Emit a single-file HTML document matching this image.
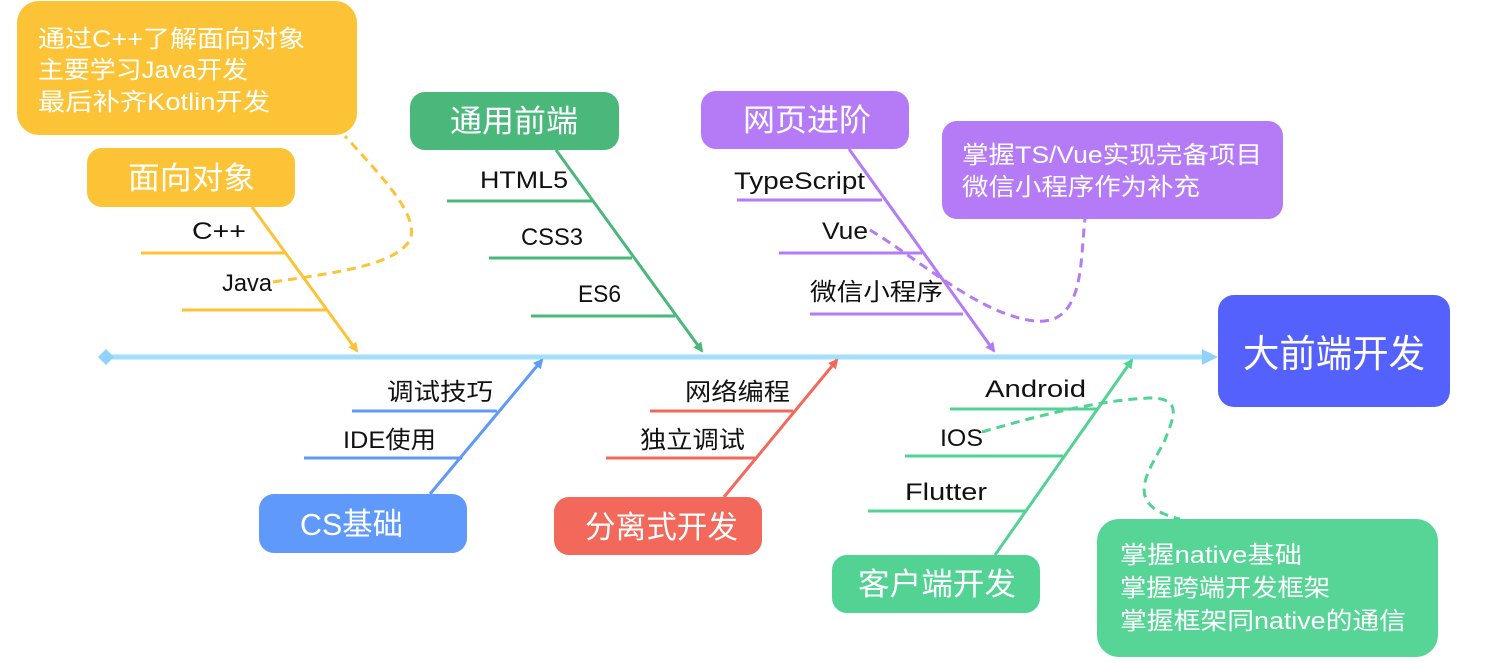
<!DOCTYPE html>
<html><head><meta charset="utf-8"><style>
html,body{margin:0;padding:0;background:#fff;width:1494px;height:663px;overflow:hidden}
svg{display:block;font-family:"Liberation Sans","Noto Sans CJK SC",sans-serif}
.l{font-size:24px;fill:#111}
.w{fill:#fff}
</style></head><body>
<svg width="1494" height="663" viewBox="0 0 1494 663">
<defs>
<marker id="ay" markerWidth="10" markerHeight="10" refX="8" refY="5" orient="auto" markerUnits="userSpaceOnUse"><path d="M0,0 L10,5 L0,10 Z" fill="#fcc336"/></marker>
<marker id="ag" markerWidth="10" markerHeight="10" refX="8" refY="5" orient="auto" markerUnits="userSpaceOnUse"><path d="M0,0 L10,5 L0,10 Z" fill="#4bb87b"/></marker>
<marker id="ap" markerWidth="10" markerHeight="10" refX="8" refY="5" orient="auto" markerUnits="userSpaceOnUse"><path d="M0,0 L10,5 L0,10 Z" fill="#b57bf7"/></marker>
<marker id="ab" markerWidth="10" markerHeight="10" refX="8" refY="5" orient="auto" markerUnits="userSpaceOnUse"><path d="M0,0 L10,5 L0,10 Z" fill="#5b9cf8"/></marker>
<marker id="ar" markerWidth="10" markerHeight="10" refX="8" refY="5" orient="auto" markerUnits="userSpaceOnUse"><path d="M0,0 L10,5 L0,10 Z" fill="#f2685a"/></marker>
<marker id="an" markerWidth="10" markerHeight="10" refX="8" refY="5" orient="auto" markerUnits="userSpaceOnUse"><path d="M0,0 L10,5 L0,10 Z" fill="#52d393"/></marker>
</defs>
<line x1="106" y1="357" x2="1205" y2="357" stroke="#a3defb" stroke-width="5"/>
<path d="M98,357 L106,349 L114,357 L106,365 Z" fill="#8fd3fb"/>
<path d="M1202,349 L1218,357 L1202,365 Z" fill="#8fd3fb"/>

<rect x="17" y="1" width="340" height="134" rx="22" fill="#fcc336"/>
<text class="w" font-size="24" x="38" y="47" textLength="267" lengthAdjust="spacingAndGlyphs">通过C++了解面向对象</text>
<text class="w" font-size="24" x="38" y="78" textLength="210" lengthAdjust="spacingAndGlyphs">主要学习Java开发</text>
<text class="w" font-size="24" x="38" y="110" textLength="232" lengthAdjust="spacingAndGlyphs">最后补齐Kotlin开发</text>
<rect x="87" y="148" width="208" height="59" rx="15" fill="#fcc336"/>
<text class="w" font-size="31" x="128" y="189" textLength="127" lengthAdjust="spacingAndGlyphs">面向对象</text>
<line x1="252" y1="207" x2="357" y2="351" stroke="#fcc336" stroke-width="3" marker-end="url(#ay)"/>
<line x1="141" y1="253" x2="286" y2="253" stroke="#fcc336" stroke-width="3"/>
<line x1="182" y1="310" x2="326" y2="310" stroke="#fcc336" stroke-width="3"/>
<text class="l" x="192" y="239" textLength="54" lengthAdjust="spacingAndGlyphs">C++</text>
<text class="l" x="222" y="291" textLength="50" lengthAdjust="spacingAndGlyphs">Java</text>
<path d="M273,282 C340,272 395,265 410,240 C420,215 380,175 345,136" fill="none" stroke="#fcc336" stroke-width="3" stroke-dasharray="9,6"/>

<rect x="410" y="92" width="209" height="58" rx="15" fill="#4bb87b"/>
<text class="w" font-size="31" x="450" y="132" textLength="128" lengthAdjust="spacingAndGlyphs">通用前端</text>
<line x1="556" y1="150" x2="702" y2="351" stroke="#4bb87b" stroke-width="3" marker-end="url(#ag)"/>
<line x1="447" y1="201" x2="592" y2="201" stroke="#4bb87b" stroke-width="3"/>
<line x1="489" y1="258" x2="632" y2="258" stroke="#4bb87b" stroke-width="3"/>
<line x1="531" y1="316" x2="675" y2="316" stroke="#4bb87b" stroke-width="3"/>
<text class="l" x="480" y="188" textLength="88" lengthAdjust="spacingAndGlyphs">HTML5</text>
<text class="l" x="521" y="245" textLength="62" lengthAdjust="spacingAndGlyphs">CSS3</text>
<text class="l" x="578" y="302" textLength="43" lengthAdjust="spacingAndGlyphs">ES6</text>

<rect x="701" y="91" width="208" height="58" rx="15" fill="#b57bf7"/>
<text class="w" font-size="31" x="743" y="131" textLength="128" lengthAdjust="spacingAndGlyphs">网页进阶</text>
<line x1="849" y1="149" x2="994" y2="351" stroke="#b57bf7" stroke-width="3" marker-end="url(#ap)"/>
<line x1="737" y1="200" x2="882" y2="200" stroke="#b57bf7" stroke-width="3"/>
<line x1="779" y1="253" x2="922" y2="253" stroke="#b57bf7" stroke-width="3"/>
<line x1="810" y1="314" x2="963" y2="314" stroke="#b57bf7" stroke-width="3"/>
<text class="l" x="734" y="189" textLength="131" lengthAdjust="spacingAndGlyphs">TypeScript</text>
<text class="l" x="822" y="239" textLength="46" lengthAdjust="spacingAndGlyphs">Vue</text>
<text class="l" x="810" y="300" textLength="133" lengthAdjust="spacingAndGlyphs">微信小程序</text>
<rect x="942" y="121" width="341" height="98" rx="15" fill="#b57bf7"/>
<text class="w" font-size="24" x="962" y="163" textLength="300" lengthAdjust="spacingAndGlyphs">掌握TS/Vue实现完备项目</text>
<text class="w" font-size="24" x="962" y="195" textLength="238" lengthAdjust="spacingAndGlyphs">微信小程序作为补充</text>
<path d="M870,230 C920,260 980,315 1035,321 C1085,326 1080,260 1085,219" fill="none" stroke="#b57bf7" stroke-width="3" stroke-dasharray="9,6"/>

<rect x="1218" y="295" width="232" height="112" rx="16" fill="#5561fd"/>
<text class="w" font-size="38" x="1243" y="367" textLength="182" lengthAdjust="spacingAndGlyphs">大前端开发</text>

<rect x="259" y="494" width="208" height="59" rx="15" fill="#5f9afa"/>
<text class="w" font-size="31" x="300" y="535" textLength="103" lengthAdjust="spacingAndGlyphs">CS基础</text>
<line x1="430" y1="494" x2="542" y2="360" stroke="#5f9afa" stroke-width="3" marker-end="url(#ab)"/>
<line x1="352" y1="411" x2="497" y2="411" stroke="#5f9afa" stroke-width="3"/>
<line x1="304" y1="458" x2="462" y2="458" stroke="#5f9afa" stroke-width="3"/>
<text class="l" x="387" y="400" textLength="106" lengthAdjust="spacingAndGlyphs">调试技巧</text>
<text class="l" x="343" y="448" textLength="93" lengthAdjust="spacingAndGlyphs">IDE使用</text>

<rect x="554" y="497" width="208" height="58" rx="15" fill="#f2685a"/>
<text class="w" font-size="31" x="585" y="538" textLength="153" lengthAdjust="spacingAndGlyphs">分离式开发</text>
<line x1="724" y1="497" x2="837" y2="360" stroke="#f2685a" stroke-width="3" marker-end="url(#ar)"/>
<line x1="650" y1="411" x2="793" y2="411" stroke="#f2685a" stroke-width="3"/>
<line x1="606" y1="458" x2="755" y2="458" stroke="#f2685a" stroke-width="3"/>
<text class="l" x="685" y="400" textLength="105" lengthAdjust="spacingAndGlyphs">网络编程</text>
<text class="l" x="640" y="448" textLength="105" lengthAdjust="spacingAndGlyphs">独立调试</text>

<rect x="832" y="555" width="208" height="58" rx="15" fill="#52d393"/>
<text class="w" font-size="31" x="858" y="595" textLength="158" lengthAdjust="spacingAndGlyphs">客户端开发</text>
<line x1="995" y1="555" x2="1132" y2="360" stroke="#52d393" stroke-width="3" marker-end="url(#an)"/>
<line x1="950" y1="409" x2="1098" y2="409" stroke="#52d393" stroke-width="3"/>
<line x1="905" y1="456" x2="1063" y2="456" stroke="#52d393" stroke-width="3"/>
<line x1="868" y1="511" x2="1027" y2="511" stroke="#52d393" stroke-width="3"/>
<text class="l" x="985" y="397" textLength="101" lengthAdjust="spacingAndGlyphs">Android</text>
<text class="l" x="940" y="446" textLength="43" lengthAdjust="spacingAndGlyphs">IOS</text>
<text class="l" x="905" y="500" textLength="82" lengthAdjust="spacingAndGlyphs">Flutter</text>
<rect x="1097" y="519" width="341" height="138" rx="22" fill="#57d596"/>
<text class="w" font-size="24" x="1120" y="563" textLength="182" lengthAdjust="spacingAndGlyphs">掌握native基础</text>
<text class="w" font-size="24" x="1120" y="596" textLength="210" lengthAdjust="spacingAndGlyphs">掌握跨端开发框架</text>
<text class="w" font-size="24" x="1120" y="629" textLength="286" lengthAdjust="spacingAndGlyphs">掌握框架同native的通信</text>
<path d="M982,432 C1040,415 1100,400 1150,398 C1185,398 1172,420 1165,440 C1150,470 1120,505 1180,519" fill="none" stroke="#52d393" stroke-width="3" stroke-dasharray="9,6"/>
</svg>
</body></html>
